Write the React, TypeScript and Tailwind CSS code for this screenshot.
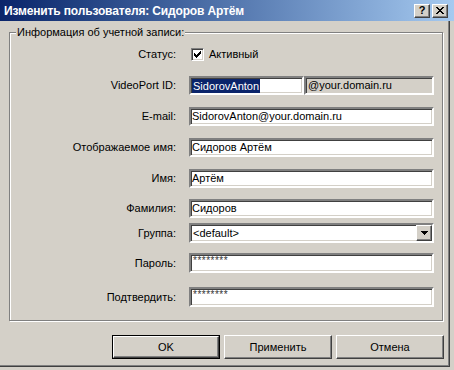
const sunken =
  'border-2 border-t-[#808080] border-l-[#808080] border-b-white border-r-white shadow-[inset_1px_1px_0_#404040,inset_-1px_-1px_0_#d4d0c8]';
const raised =
  'border border-t-white border-l-white border-b-[#404040] border-r-[#404040] shadow-[inset_-1px_-1px_0_#808080]';

function Label({ text }: { text: string }) {
  return <div className="w-[166px] shrink-0 text-right">{text}</div>;
}

function TextField({ value, className }: { value: string; className: string }) {
  return (
    <div className={`${sunken} ${className} flex items-center bg-white pl-[1px] whitespace-nowrap`}>
      {value}
    </div>
  );
}

function PasswordField() {
  return (
    <div className={`${sunken} ml-[13px] h-[20px] w-[245px] bg-white pl-[2px] pt-[1px] text-[10px] leading-[10px] tracking-[0.5px] text-[#333]`}>
      ********
    </div>
  );
}

export default function App() {
  return (
    <div className="h-[370px] w-[454px] bg-[#d4d0c8] font-['Liberation_Sans',Arial,sans-serif] text-[11px] text-black">
      {/* title bar */}
      <div className="flex h-[21px] w-[454px] items-center bg-gradient-to-r from-[#0a246a] to-[#a6caf0] pl-[4px] pr-[6px]">
        <div className="flex-1 text-[12px] font-bold tracking-[-0.15px] text-white">Изменить пользователя: Сидоров Артём</div>
        <div className={`${raised} flex h-[14px] w-[16px] items-center justify-center bg-[#d4d0c8] text-[11px] leading-none font-bold`}>
          ?
        </div>
        <div className={`${raised} ml-[2px] flex h-[14px] w-[16px] items-center justify-center bg-[#d4d0c8]`}>
          <svg width="8" height="7" viewBox="0 0 8 7" shapeRendering="crispEdges">
            <path d="M0 0h2v1h-2zM6 0h2v1h-2zM1 1h2v1h-2zM5 1h2v1h-2zM2 2h4v1h-4zM3 3h2v1h-2zM2 4h4v1h-4zM1 5h2v1h-2zM5 5h2v1h-2zM0 6h2v1h-2zM6 6h2v1h-2z" fill="#000" />
          </svg>
        </div>
      </div>

      {/* body */}
      <div className="flex h-[346px] w-[450px] flex-col border-r border-b border-[#404040] shadow-[inset_-1px_-1px_0_#808080]">
        <div className="relative mt-[11px] ml-[9px] h-[289px] w-[434px] border border-[#808080] shadow-[inset_1px_1px_0_#fff,1px_1px_0_#fff]">
          <div className="absolute top-[-7px] left-[6px] bg-[#d4d0c8] px-[1px] leading-[13px]">
            Информация об учетной записи:
          </div>

          <div className="flex flex-col">
            <div className="mt-[12px] flex h-[19px] items-center">
              <Label text="Статус:" />
              <div className="ml-[15px] flex h-[13px] w-[13px] items-center justify-center border border-t-[#808080] border-l-[#808080] border-b-white border-r-white bg-white shadow-[inset_1px_1px_0_#404040,inset_-1px_-1px_0_#d4d0c8]">
                <svg width="7" height="7" viewBox="0 0 7 7" shapeRendering="crispEdges">
                  <path d="M6 0h1v3h-1zM5 1h1v3h-1zM4 2h1v3h-1zM3 3h1v3h-1zM2 4h1v3h-1zM1 3h1v3h-1zM0 2h1v3h-1z" fill="#000" />
                </svg>
              </div>
              <span className="ml-[5px]">Активный</span>
            </div>

            <div className="mt-[12px] flex h-[19px] items-center">
              <Label text="VideoPort ID:" />
              <div className={`${sunken} ml-[13px] flex h-[19px] w-[115px] items-center bg-white pl-[1px]`}>
                <span className="bg-[#0a246a] px-[1px] leading-[14px] text-white">SidorovAnton</span>
              </div>
              <div className={`${sunken} flex h-[19px] w-[130px] items-center bg-[#d4d0c8] pl-[2px]`}>@your.domain.ru</div>
            </div>

            <div className="mt-[12px] flex h-[19px] items-center">
              <Label text="E-mail:" />
              <TextField value="SidorovAnton@your.domain.ru" className="ml-[13px] h-[19px] w-[245px]" />
            </div>

            <div className="mt-[12px] flex h-[19px] items-center">
              <Label text="Отображаемое имя:" />
              <TextField value="Сидоров Артём" className="ml-[13px] h-[19px] w-[245px]" />
            </div>

            <div className="mt-[12px] flex h-[19px] items-center">
              <Label text="Имя:" />
              <TextField value="Артём" className="ml-[13px] h-[19px] w-[245px]" />
            </div>

            <div className="mt-[11px] flex h-[19px] items-center">
              <Label text="Фамилия:" />
              <TextField value="Сидоров" className="ml-[13px] h-[19px] w-[245px]" />
            </div>

            <div className="mt-[5px] flex h-[20px] items-center">
              <Label text="Группа:" />
              <div className={`${sunken} ml-[13px] flex h-[20px] w-[245px] items-center bg-white pl-[2px]`}>
                <span className="flex-1">&lt;default&gt;</span>
                <div className={`${raised} flex h-[16px] w-[16px] items-center justify-center bg-[#d4d0c8]`}>
                  <svg width="7" height="4" viewBox="0 0 7 4" shapeRendering="crispEdges">
                    <path d="M0 0h7v1h-7zM1 1h5v1h-5zM2 2h3v1h-3zM3 3h1v1h-1z" fill="#000" />
                  </svg>
                </div>
              </div>
            </div>

            <div className="mt-[10px] flex h-[20px] items-center">
              <Label text="Пароль:" />
              <PasswordField />
            </div>

            <div className="mt-[14px] flex h-[20px] items-center">
              <Label text="Подтвердить:" />
              <PasswordField />
            </div>
          </div>
        </div>

        <div className="mt-[14px] ml-[112px] flex gap-[4px]">
          <div className="flex h-[24px] w-[108px] border border-black">
            <div className={`${raised} flex flex-1 items-center justify-center bg-[#d4d0c8]`}>OK</div>
          </div>
          <div className={`${raised} flex h-[24px] w-[108px] items-center justify-center bg-[#d4d0c8]`}>Применить</div>
          <div className={`${raised} flex h-[24px] w-[108px] items-center justify-center bg-[#d4d0c8]`}>Отмена</div>
        </div>
      </div>
    </div>
  );
}
